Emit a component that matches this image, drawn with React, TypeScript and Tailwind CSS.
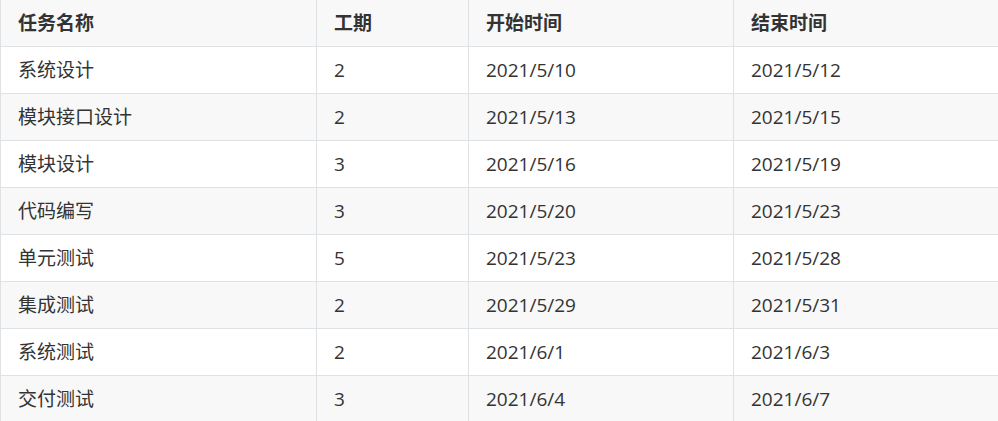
import React from 'react';

const rows = [
  ['系统设计', '2', '2021/5/10', '2021/5/12'],
  ['模块接口设计', '2', '2021/5/13', '2021/5/15'],
  ['模块设计', '3', '2021/5/16', '2021/5/19'],
  ['代码编写', '3', '2021/5/20', '2021/5/23'],
  ['单元测试', '5', '2021/5/23', '2021/5/28'],
  ['集成测试', '2', '2021/5/29', '2021/5/31'],
  ['系统测试', '2', '2021/6/1', '2021/6/3'],
  ['交付测试', '3', '2021/6/4', '2021/6/7'],
];

const App: React.FC = () => {
  return (
    <div
      className="w-[998px] h-[421px] overflow-hidden bg-white text-[#333] text-[19px]"
      style={{ fontFamily: '"Open Sans", "Noto Sans CJK SC", sans-serif' }}
    >
      <table className="table-fixed border-collapse w-[1000px] -mt-px">
        <colgroup>
          <col className="w-[316px]" />
          <col className="w-[152px]" />
          <col className="w-[265px]" />
          <col className="w-[267px]" />
        </colgroup>
        <thead>
          <tr className="bg-[#f8f8f8]">
            {['任务名称', '工期', '开始时间', '结束时间'].map((h) => (
              <th
                key={h}
                className="border border-[#dfe2e5] h-[47px] px-[17px] py-0 text-left font-bold leading-[26px]"
              >
                {h}
              </th>
            ))}
          </tr>
        </thead>
        <tbody>
          {rows.map((r, i) => (
            <tr key={i} className={i % 2 === 1 ? 'bg-[#f8f8f8]' : 'bg-white'}>
              {r.map((c, j) => (
                <td key={j} className="border border-[#dfe2e5] h-[47px] px-[17px] py-0 leading-[26px]">
                  {c}
                </td>
              ))}
            </tr>
          ))}
        </tbody>
      </table>
    </div>
  );
};

export default App;
